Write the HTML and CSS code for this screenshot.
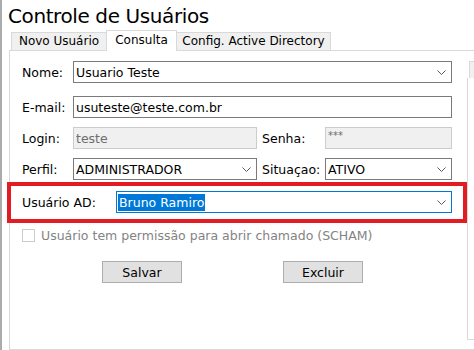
FILE: index.html
```html
<!DOCTYPE html>
<html lang="pt-BR">
<head>
    <meta charset="UTF-8">
    <title>Controle de Usuários</title>
    <link rel="stylesheet" href="styles.css">
</head>
<body>
    <div class="window">
        <h1 class="title">Controle de Usuários</h1>

        <div class="tabs">
            <div class="tab tab-novo">Novo Usuário</div>
            <div class="tab tab-active">Consulta</div>
            <div class="tab tab-config">Config. Active Directory</div>
        </div>

        <div class="panel">
            <form class="form">
                <div class="row">
                    <label class="lbl">Nome:</label>
                    <div class="combo combo-wide">
                        <span class="combo-text">Usuario Teste</span>
                        <svg class="arrow" width="9" height="5" viewBox="0 0 9 5"><polyline points="0.5,0.5 4.5,4.5 8.5,0.5" fill="none" stroke="#5a5a5a" stroke-width="1"/></svg>
                    </div>
                </div>

                <div class="row row-email">
                    <label class="lbl">E-mail:</label>
                    <input class="field field-wide" type="text" value="usuteste@teste.com.br">
                </div>

                <div class="row row-gap">
                    <label class="lbl">Login:</label>
                    <input class="field field-half disabled" type="text" value="teste" disabled>
                    <label class="lbl lbl-right">Senha:</label>
                    <input class="field field-small disabled pwd" type="text" value="***" disabled>
                </div>

                <div class="row row-gap">
                    <label class="lbl">Perfil:</label>
                    <div class="combo combo-half">
                        <span class="combo-text">ADMINISTRADOR</span>
                        <svg class="arrow" width="9" height="5" viewBox="0 0 9 5"><polyline points="0.5,0.5 4.5,4.5 8.5,0.5" fill="none" stroke="#5a5a5a" stroke-width="1"/></svg>
                    </div>
                    <label class="lbl lbl-right">Situaçao:</label>
                    <div class="combo combo-small">
                        <span class="combo-text">ATIVO</span>
                        <svg class="arrow" width="9" height="5" viewBox="0 0 9 5"><polyline points="0.5,0.5 4.5,4.5 8.5,0.5" fill="none" stroke="#5a5a5a" stroke-width="1"/></svg>
                    </div>
                </div>

                <div class="highlight-box">
                    <div class="row">
                        <label class="lbl lbl-ad">Usuário AD:</label>
                        <div class="combo combo-ad focused">
                            <span class="combo-text"><span class="selected">Bruno Ramiro</span></span>
                            <svg class="arrow" width="9" height="5" viewBox="0 0 9 5"><polyline points="0.5,0.5 4.5,4.5 8.5,0.5" fill="none" stroke="#5a5a5a" stroke-width="1"/></svg>
                        </div>
                    </div>
                </div>

                <div class="check-row">
                    <span class="checkbox"></span>
                    <span class="check-label">Usuário tem permissão para abrir chamado (SCHAM)</span>
                </div>

                <div class="buttons">
                    <button type="button" class="btn btn-salvar">Salvar</button>
                    <button type="button" class="btn btn-excluir">Excluir</button>
                </div>
            </form>

            <div class="side">
                <div class="side-tab"></div>
                <div class="side-panel"></div>
            </div>
        </div>
    </div>
</body>
</html>
```

FILE: styles.css
```css
body {
    margin: 0;
    padding: 0;
    background-color: #fff;
    font-family: "DejaVu Sans", Verdana, sans-serif;
    font-size: 12.5px;
    color: #000;
}
.window {
    width: 472px;
    height: 350px;
    border-left: 2px solid #ababab;
    overflow: hidden;
}
.title {
    margin: 0;
    padding: 4px 0 0 6px;
    height: 26px;
    font-size: 20px;
    font-weight: normal;
    line-height: 24px;
    letter-spacing: -0.4px;
}
.tabs {
    display: flex;
    align-items: flex-end;
    height: 20px;
    margin-left: 9px;
    font-size: 12px;
}
.tab {
    box-sizing: border-box;
    height: 18px;
    border: 1px solid #d9d9d9;
    border-bottom: none;
    background-color: #f0f0f0;
    text-align: center;
    line-height: 17px;
}
.tab-novo {
    width: 95px;
    border-right: none;
}
.tab-active {
    width: 71px;
    height: 21px;
    margin-bottom: -1px;
    background-color: #fff;
    position: relative;
    line-height: 18px;
}
.tab-config {
    width: 154px;
    border-left: none;
}
.panel {
    display: flex;
    box-sizing: border-box;
    width: 480px;
    height: 300px;
    margin-left: 7px;
    border: 1px solid #d9d9d9;
}
.form {
    width: 430px;
    padding: 10px 15px 0 12px;
    flex-shrink: 0;
}
.row {
    display: flex;
    align-items: center;
    height: 22px;
}
.row-email {
    margin-top: 13px;
}
.row-gap {
    margin-top: 9px;
}
.lbl {
    width: 51px;
    flex-shrink: 0;
}
.lbl-right {
    width: 63px;
    margin-left: 5px;
}
.lbl-ad {
    width: 94px;
}
.field, .combo {
    box-sizing: border-box;
    height: 22px;
    border: 1px solid #7a7a7a;
    background-color: #fff;
    font-family: inherit;
    font-size: 12.5px;
    color: #000;
    padding: 0 2px;
    margin: 0;
    outline: none;
}
.combo {
    display: flex;
    align-items: center;
    justify-content: space-between;
    padding-right: 5px;
}
.field-wide, .combo-wide {
    width: 379px;
}
.field-half, .combo-half {
    width: 184px;
}
.field-small, .combo-small {
    width: 127px;
}
.combo-ad {
    width: 336px;
    border-color: #0078d7;
    padding-left: 1px;
}
.disabled {
    border-color: #cccccc;
    background-color: #f0f0f0;
    color: #6d6d6d;
}
.pwd {
    font-size: 10px;
    padding-bottom: 5px;
}
.selected {
    background-color: #0078d7;
    color: #fff;
    padding: 1px 1px;
}
.highlight-box {
    margin: 2px -15px 0 -15px;
    padding: 5px 10px 6px 11px;
    border: 4px solid #e31b23;
}
.check-row {
    display: flex;
    align-items: center;
    height: 13px;
    margin-top: 6px;
}
.checkbox {
    box-sizing: border-box;
    width: 13px;
    height: 13px;
    border: 1px solid #cccccc;
    background-color: #fff;
}
.check-label {
    margin-left: 6px;
    color: #838383;
}
.buttons {
    display: flex;
    margin-top: 19px;
}
.btn {
    box-sizing: border-box;
    width: 80px;
    height: 22px;
    border: 1px solid #adadad;
    background-color: #e1e1e1;
    font-family: inherit;
    font-size: 12.5px;
    color: #000;
    padding: 0;
}
.btn-salvar {
    margin-left: 80px;
}
.btn-excluir {
    margin-left: 101px;
}
.side {
    display: flex;
    flex-direction: column;
    margin-top: 10px;
}
.side-tab {
    box-sizing: border-box;
    height: 17px;
    width: 20px;
    margin-left: 2px;
    border: 1px solid #d9d9d9;
    border-bottom: none;
    background-color: #f0f0f0;
}
.side-panel {
    width: 20px;
    height: 261px;
    border-left: 1px solid #d9d9d9;
    border-bottom: 1px solid #d9d9d9;
}
```
